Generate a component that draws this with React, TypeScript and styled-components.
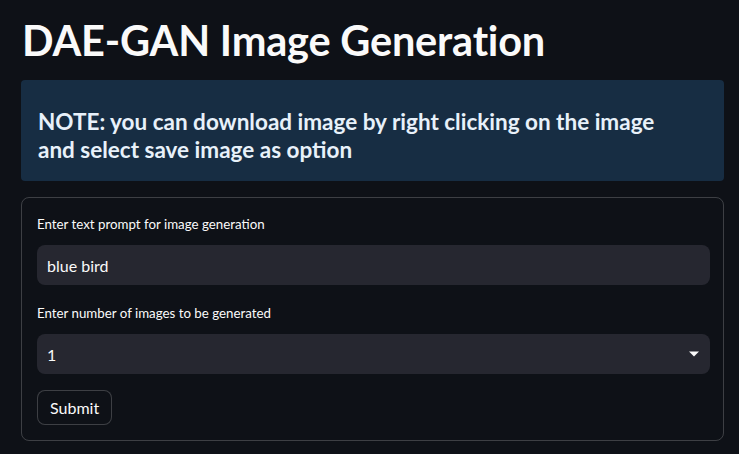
import React from "react";
import styled, { createGlobalStyle } from "styled-components";

const Global = createGlobalStyle`
  html, body { margin: 0; padding: 0; background: #0e1117; }
  body { font-family: "Source Sans Pro", Lato, "Noto Sans", sans-serif; color: #fafafa; }
  * { box-sizing: border-box; }
`;

const Page = styled.main`
  display: flex;
  flex-direction: column;
  padding: 0 15px 0 21px;
  width: 739px;
`;

const Title = styled.h1`
  margin: 0;
  padding: 14px 0 0 1px;
  height: 80px;
  font-size: 41.5px;
  font-weight: 700;
  line-height: 52px;
  color: #fafafa;
  letter-spacing: -0.2px;
`;

const Note = styled.div`
  background: #172d43;
  border-radius: 4px;
  padding: 28px 40px 17px 17px;
  margin-bottom: 16px;
`;

const NoteText = styled.h3`
  margin: 0;
  font-size: 22.5px;
  font-weight: 700;
  line-height: 28px;
  color: #e8f1fa;
`;

const Form = styled.form`
  border: 1px solid rgba(250, 250, 250, 0.2);
  border-radius: 8px;
  padding: 16px 13px 15px 15px;
  display: flex;
  flex-direction: column;
`;

const Label = styled.label<{ $first?: boolean }>`
  font-size: 13.3px;
  line-height: 20px;
  color: #fafafa;
  margin-bottom: 11px;
  margin-top: ${(p) => (p.$first ? "0" : "18px")};
`;

const Field = styled.div`
  flex-shrink: 0;
  height: 40px;
  background: #262730;
  border-radius: 8px;
  display: flex;
  align-items: center;
  padding: 0 10px;
  font-size: 16px;
  color: #fafafa;
`;

const Value = styled.span`
  flex: 1;
`;

const Button = styled.button`
  align-self: flex-start;
  height: 35px;
  padding: 0 12px;
  background: #0e1117;
  border: 1px solid rgba(250, 250, 250, 0.2);
  border-radius: 8px;
  color: #fafafa;
  font-family: inherit;
  font-size: 16px;
  margin-top: 16px;
`;

export default function App() {
  return (
    <>
      <Global />
      <Page>
        <Title>DAE-GAN Image Generation</Title>
        <Note>
          <NoteText>
            NOTE: you can download image by right clicking on the image and select save image as option
          </NoteText>
        </Note>
        <Form onSubmit={(e) => e.preventDefault()}>
          <Label $first>Enter text prompt for image generation</Label>
          <Field>
            <Value>blue bird</Value>
          </Field>
          <Label>Enter number of images to be generated</Label>
          <Field>
            <Value>1</Value>
            <svg width="12" height="8" viewBox="0 0 12 8">
              <path d="M1 1.5h10L6 6.5z" fill="#fafafa" />
            </svg>
          </Field>
          <Button type="button">Submit</Button>
        </Form>
      </Page>
    </>
  );
}
